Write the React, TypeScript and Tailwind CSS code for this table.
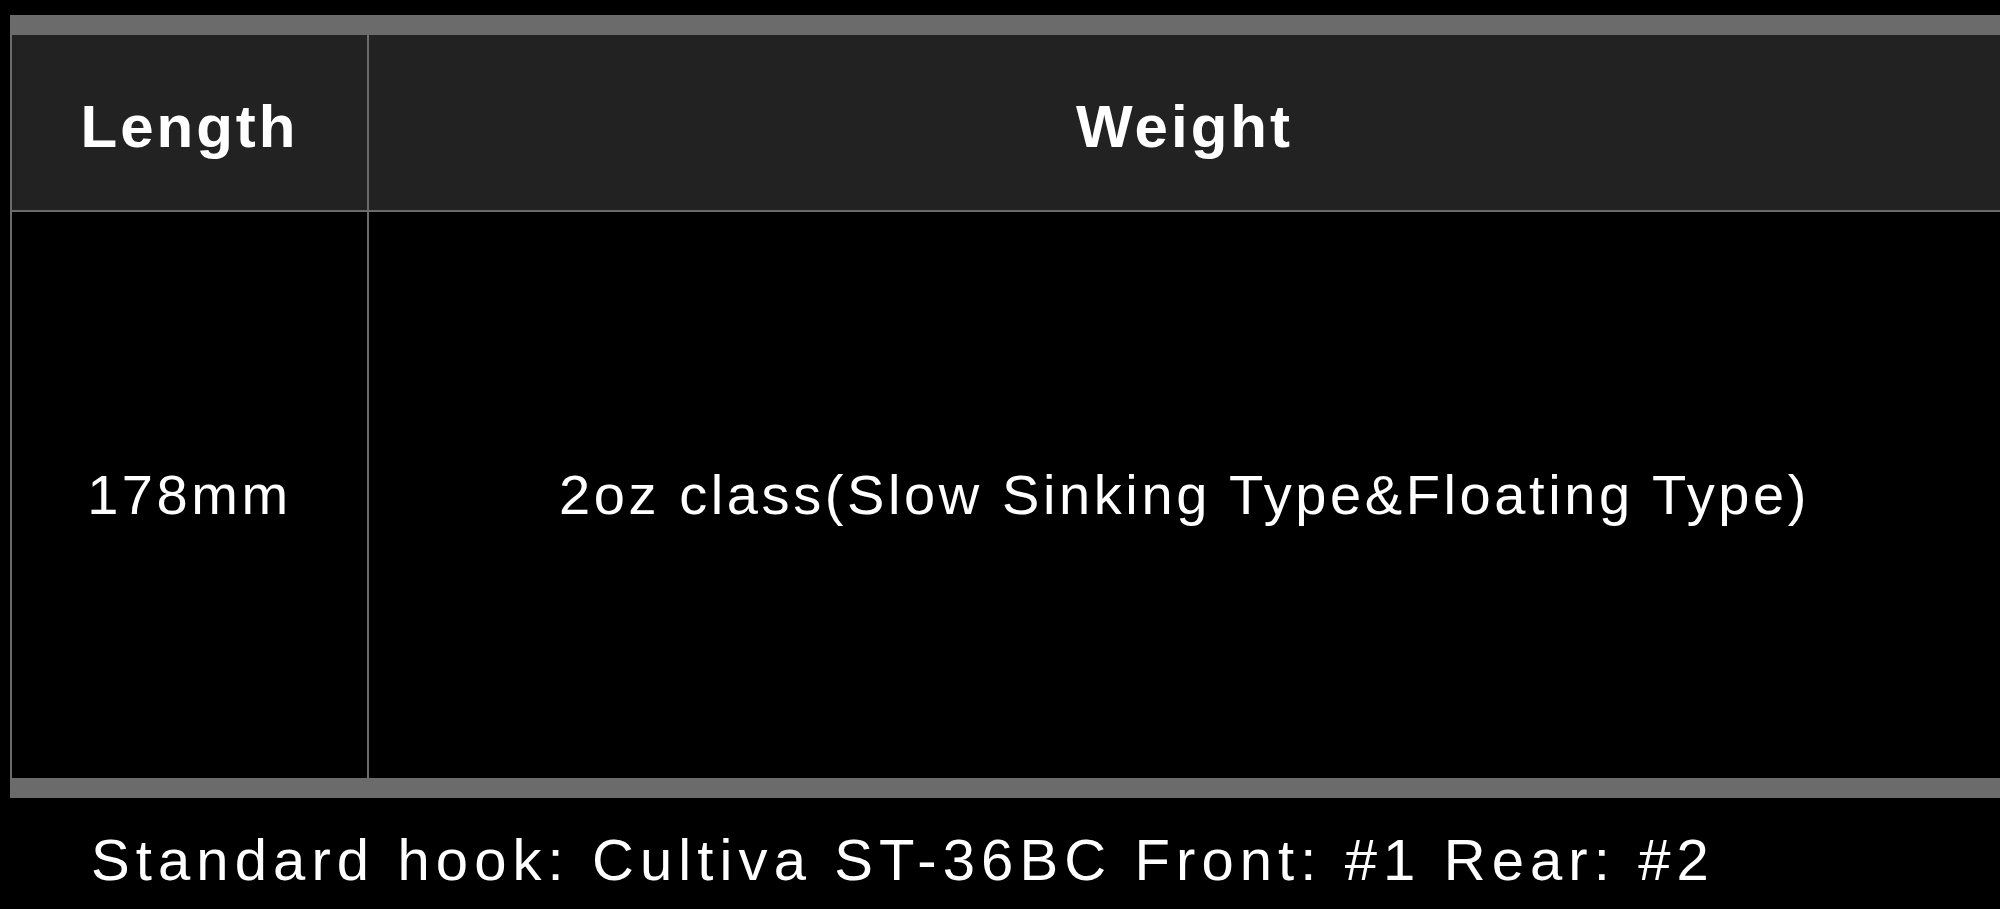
export default function App() {
  return (
    <div className="min-h-screen w-full overflow-hidden bg-black text-white font-['Liberation_Sans',Arial,sans-serif]">
      {/* Spec table */}
      <div className="ml-[10px] mt-[15px] w-[1990px] border-t-[20px] border-b-[20px] border-l-2 border-[#6b6b6b]">
        {/* Header row */}
        <div className="flex h-[177px] bg-[#222222] border-b-2 border-[#6b6b6b]">
          <div className="w-[357px] shrink-0 pt-2 border-r-2 border-[#6b6b6b] flex items-center justify-center">
            <span className="text-[60px] leading-none font-bold tracking-[3px]">Length</span>
          </div>
          <div className="flex-1 pt-2 flex items-center justify-center">
            <span className="text-[60px] leading-none font-bold tracking-[3px]">Weight</span>
          </div>
        </div>

        {/* Data row */}
        <div className="flex h-[566px]">
          <div className="w-[357px] shrink-0 border-r-2 border-[#6b6b6b] flex items-center justify-center">
            <span className="text-[56px] leading-none tracking-[3.6px]">178mm</span>
          </div>
          <div className="flex-1 flex items-center justify-center">
            <span className="text-[56px] leading-none tracking-[3.6px]">
              2oz class(Slow Sinking Type&amp;Floating Type)
            </span>
          </div>
        </div>
      </div>

      {/* Hook note */}
      <p className="ml-[91px] mt-[29px] text-[58px] leading-[66px] tracking-[6.1px] whitespace-nowrap">
        Standard hook: Cultiva ST-36BC Front: #1 Rear: #2
      </p>
    </div>
  );
}
